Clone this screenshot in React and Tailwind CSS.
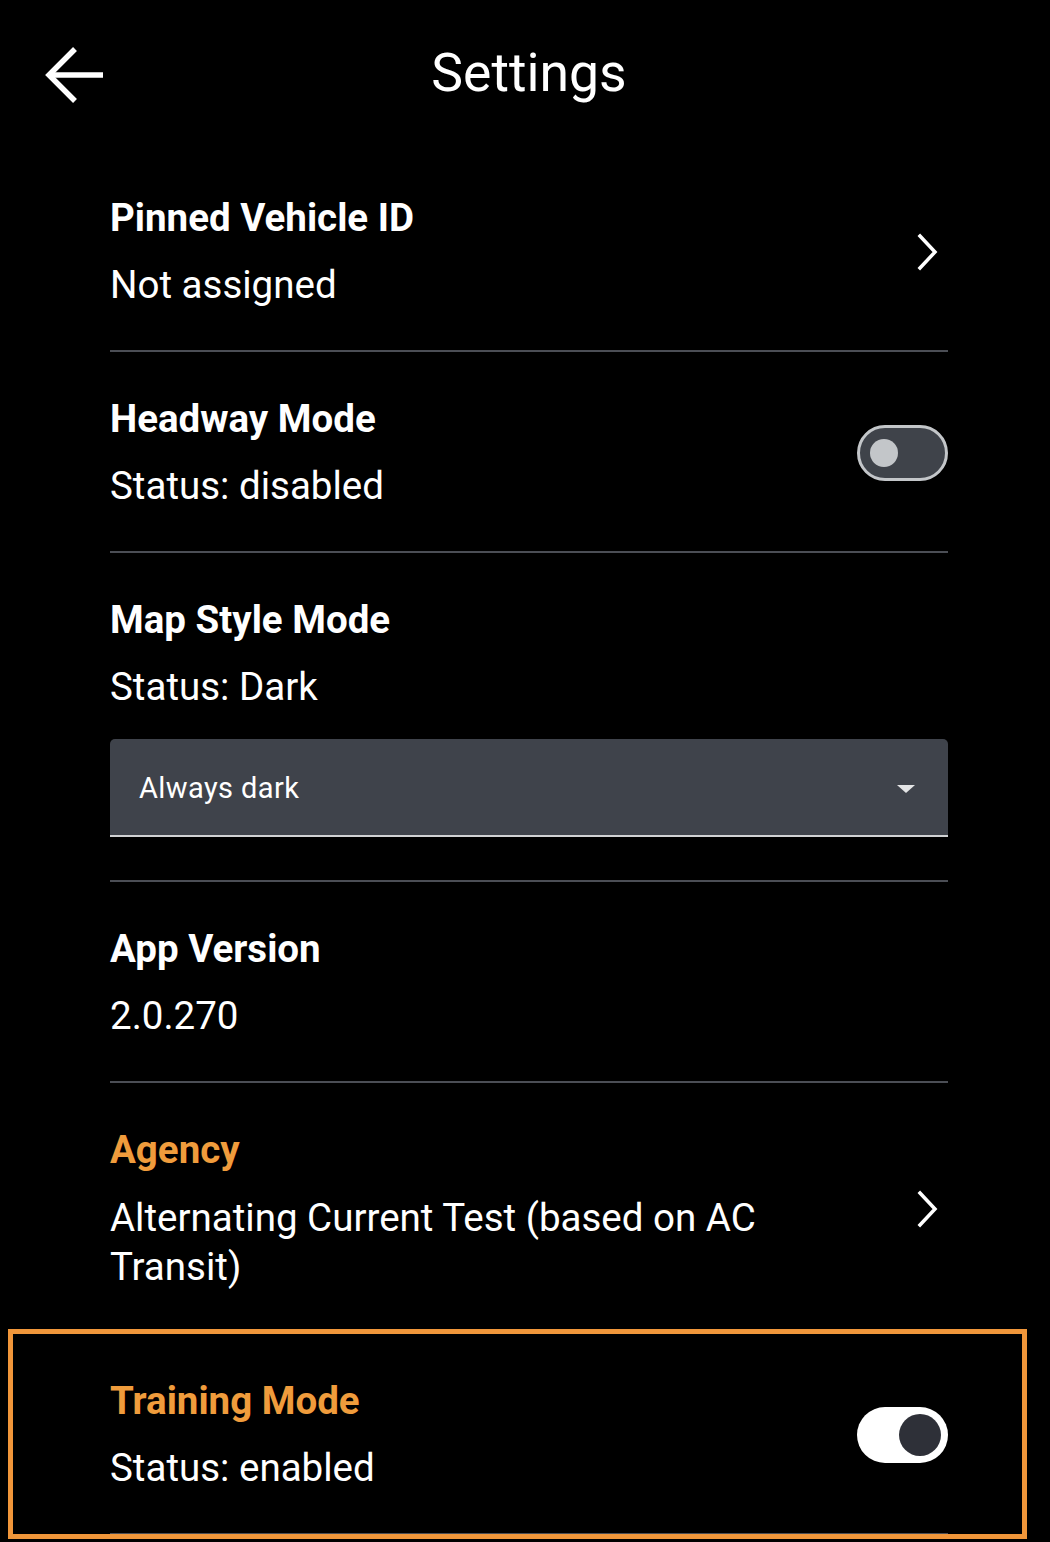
import React from 'react';

const ORANGE = 'text-[#f09c3c]';

function Chevron() {
  return (
    <svg width="24" height="38" viewBox="0 0 24 38" fill="none" stroke="white" strokeWidth="3.5" strokeLinecap="square">
      <polyline points="4,3 19,19 4,35" />
    </svg>
  );
}

function Toggle({ on }) {
  if (on) {
    return (
      <div className="w-[91px] h-[56px] rounded-full bg-white flex items-center justify-end pr-[7px]">
        <div className="w-[42px] h-[42px] rounded-full bg-[#2e3038]" />
      </div>
    );
  }
  return (
    <div className="w-[91px] h-[56px] rounded-full bg-[#3f434a] border-[3px] border-[#c3c6c9] flex items-center pl-[10px]">
      <div className="w-[28px] h-[28px] rounded-full bg-[#c3c6c9]" />
    </div>
  );
}

function Row({ title, subtitle, highlight, right, children, tall }) {
  return (
    <div className={`border-b-2 border-[#4b4e55] pt-[43px] ${tall ? 'pb-[43px]' : 'pb-[41px]'} flex items-center`}>
      <div className="flex-1 pr-[150px]">
        <div className={`text-[38.5px] leading-[48px] font-bold ${highlight ? ORANGE : 'text-white'}`}>{title}</div>
        <div className="text-[38.5px] leading-[48px] text-white mt-[19px]">{subtitle}</div>
        {children}
      </div>
      {right && <div className="shrink-0 flex items-center">{right}</div>}
    </div>
  );
}

export default function App() {
  return (
    <div className="min-h-screen bg-black font-['Roboto',sans-serif] antialiased">
      {/* Header */}
      <div className="h-[151px] grid grid-cols-[1fr_auto_1fr] items-center">
        <div className="pl-[44px] pb-[2px] flex items-center">
          <svg width="62" height="58" viewBox="0 0 62 58" fill="none" stroke="white" strokeWidth="5.5">
            <polyline points="31,3 5,29 31,55" />
            <line x1="5" y1="29" x2="59" y2="29" />
          </svg>
        </div>
        <h1 className="text-[53.5px] text-white font-normal pl-[8px] pb-[4px]">Settings</h1>
        <div />
      </div>

      <div className="ml-[110px] mr-[102px]">
        <Row title="Pinned Vehicle ID" subtitle="Not assigned" right={<div className="pr-[8px]"><Chevron /></div>} />
        <Row title="Headway Mode" subtitle="Status: disabled" right={<Toggle on={false} />} />
        <Row title="Map Style Mode" subtitle="Status: Dark" tall>
          <div className="mt-[28px] -mr-[150px] h-[98px] bg-[#3f434b] rounded-t-[5px] border-b-2 border-[#d0d2d4] flex items-center justify-between pl-[29px] pr-[33px] pt-[4px]">
            <span className="text-[29px] text-white tracking-[0.4px]">Always dark</span>
            <svg width="18" height="10" viewBox="0 0 18 10"><polygon points="0,1 18,1 9,9" fill="#e4e5e6" /></svg>
          </div>
        </Row>
        <Row title="App Version" subtitle="2.0.270" />
        <div className="pt-[43px] pb-[41px] border-b-2 border-[#4b4e55] flex items-center">
          <div className="flex-1 pr-[150px]">
            <div className={`text-[38.5px] leading-[48px] font-bold ${ORANGE}`}>Agency</div>
            <div className="text-[38.5px] leading-[49px] text-white mt-[19px]">Alternating Current Test (based on AC Transit)</div>
          </div>
          <div className="shrink-0 pr-[8px] flex items-center"><Chevron /></div>
        </div>
        <div className="relative">
          <div className="absolute -left-[102px] -right-[79px] -top-[5px] -bottom-[4px] border-[5px] border-[#f0963a] pointer-events-none" />
          <Row title="Training Mode" highlight subtitle="Status: enabled" right={<Toggle on />} />
        </div>
      </div>
    </div>
  );
}
